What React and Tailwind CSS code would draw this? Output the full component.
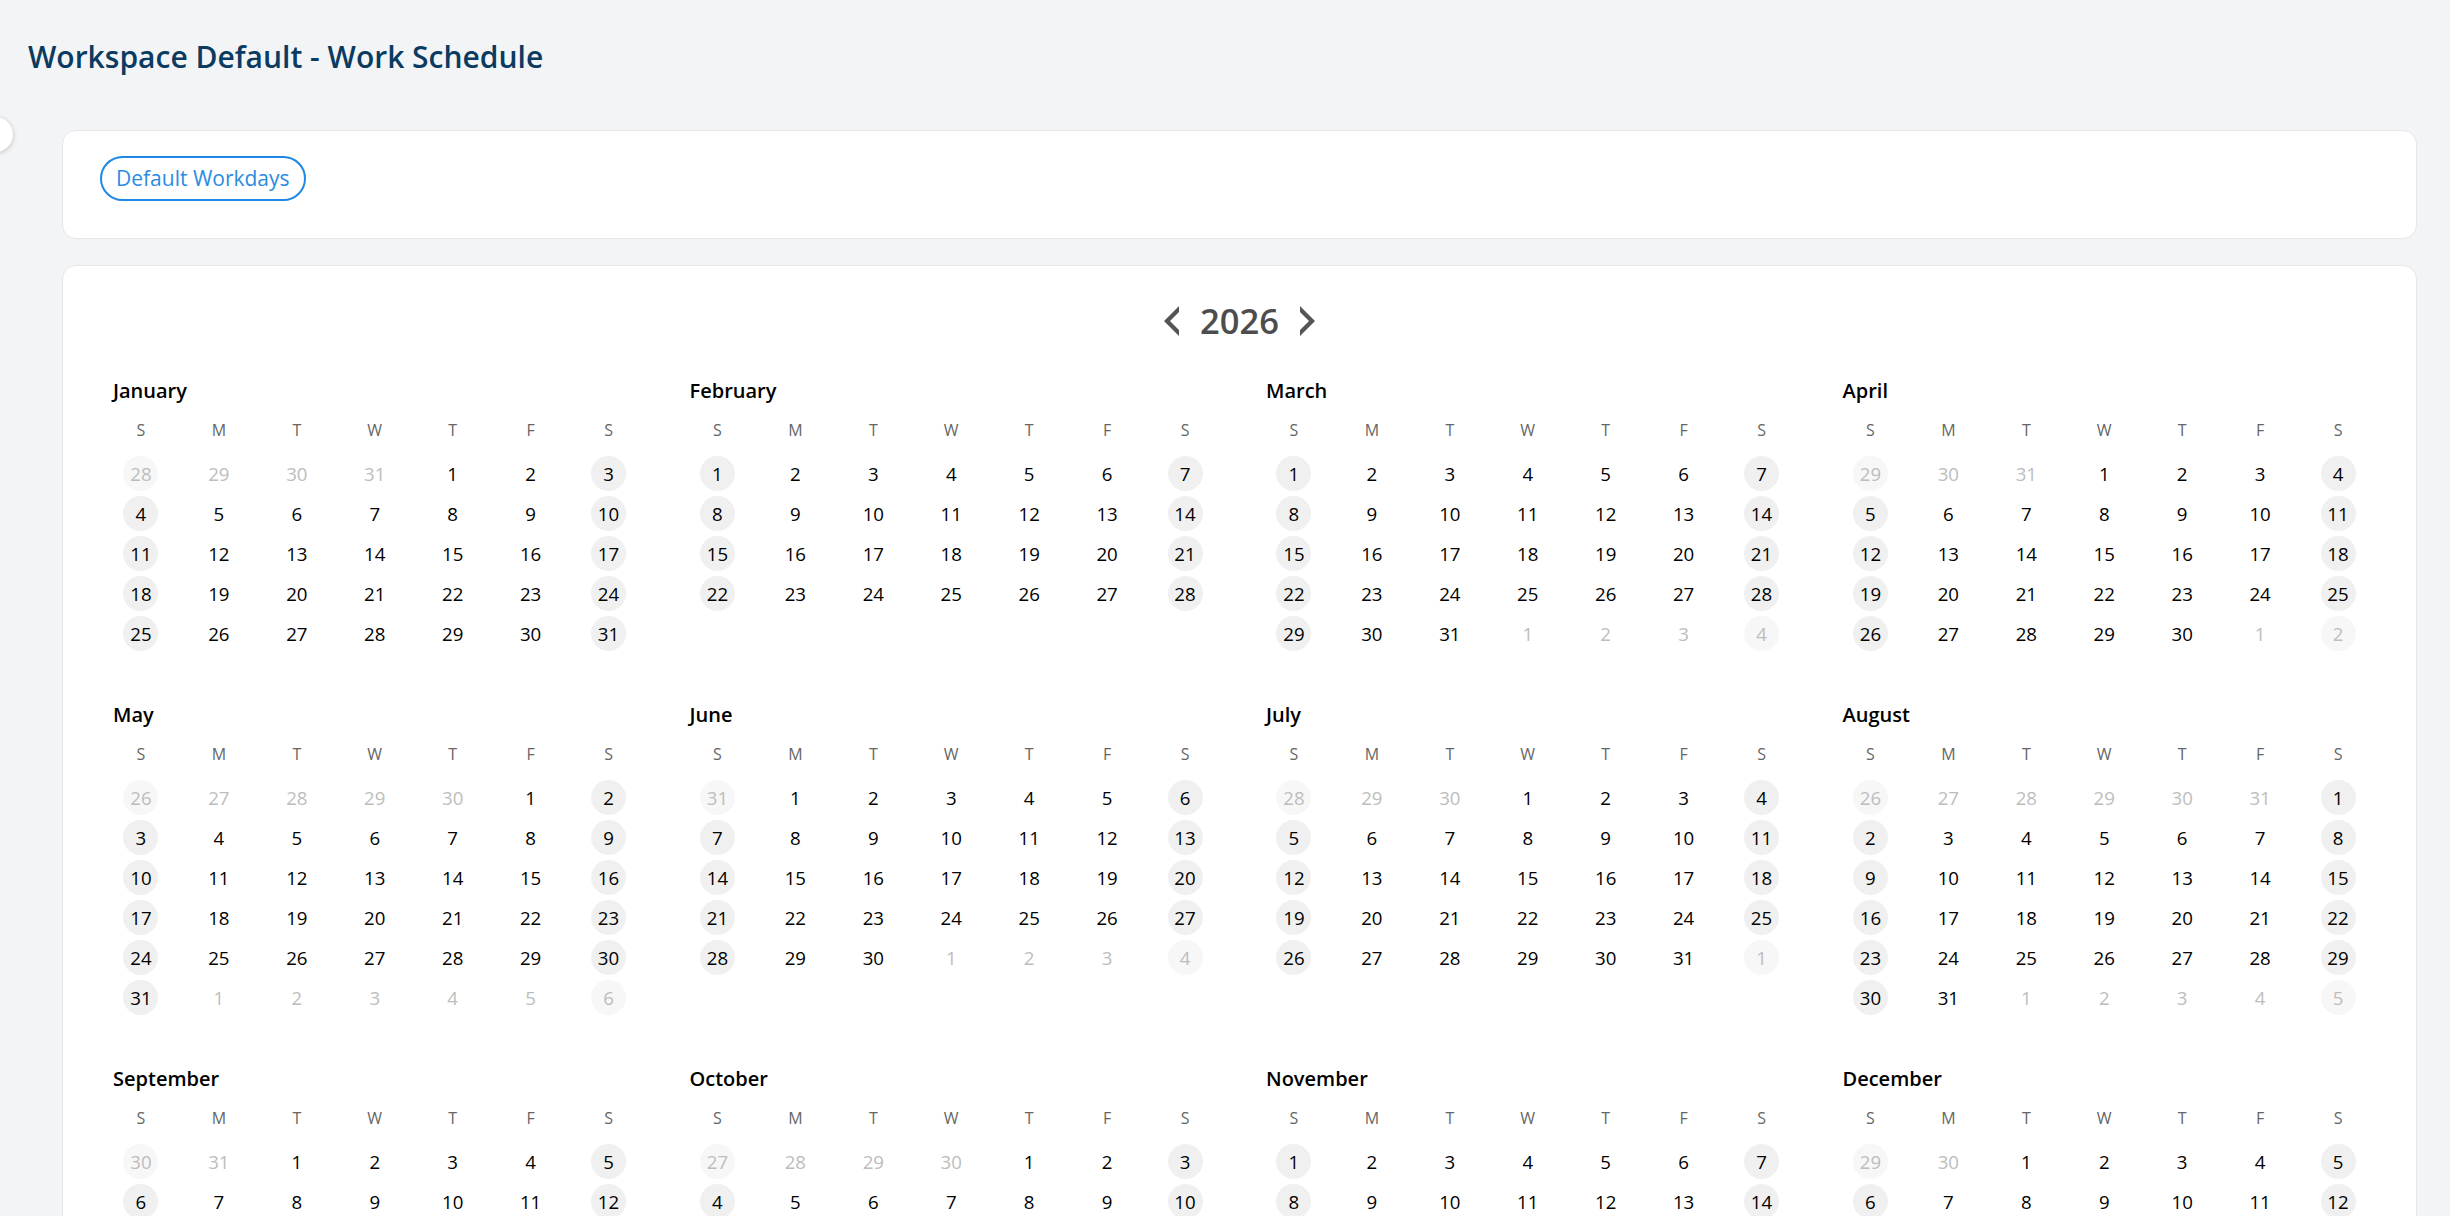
import React from "react";
import clsx from "clsx";

const YEAR = 2026;
const MONTHS = [
  "January",
  "February",
  "March",
  "April",
  "May",
  "June",
  "July",
  "August",
  "September",
  "October",
  "November",
  "December",
];
const WEEKDAYS = ["S", "M", "T", "W", "T", "F", "S"];

// full weeks (Sunday first) covering the month, padded with the neighbours' days
function monthDays(year, month) {
  const first = new Date(year, month, 1);
  const last = new Date(year, month + 1, 0);
  const start = new Date(year, month, 1 - first.getDay());
  const end = new Date(year, month, last.getDate() + (6 - last.getDay()));
  const days = [];
  for (let d = new Date(start); d <= end; d.setDate(d.getDate() + 1)) {
    days.push({
      key: d.toISOString(),
      day: d.getDate(),
      inMonth: d.getMonth() === month,
      weekend: d.getDay() === 0 || d.getDay() === 6,
    });
  }
  return days;
}

function Chevron({ dir }) {
  const points =
    dir === "left"
      ? "0,15 15,0 15,6 6,15 15,24 15,30"
      : "15,15 0,0 0,6 9,15 0,24 0,30";
  return (
    <button className="flex items-center">
      <svg width="15" height="30" viewBox="0 0 15 30">
        <polygon points={points} fill="#555555" />
      </svg>
    </button>
  );
}

function DayCell({ day, inMonth, weekend }) {
  return (
    <div
      className={clsx(
        "flex h-[35px] w-[35px] items-center justify-center rounded-full text-[18.67px] leading-[35px]",
        weekend && (inMonth ? "bg-[#f0f0f0]" : "bg-[#f7f7f7]"),
        inMonth ? "text-black" : "text-[#bdbdbd]"
      )}
    >
      {day}
    </div>
  );
}

function Month({ index }) {
  const days = monthDays(YEAR, index);
  return (
    <div>
      <div className="text-[20px] font-semibold leading-[28px] text-black">
        {MONTHS[index]}
      </div>
      <div className="mt-[13px] grid grid-cols-7 gap-x-[22px] text-center text-[16px] leading-[24px] text-[#666666]">
        {WEEKDAYS.map((w, i) => (
          <div key={i}>{w}</div>
        ))}
      </div>
      <div className="mt-[14px] grid grid-cols-7 justify-items-center gap-x-[22px] gap-y-[5px]">
        {days.map((d) => (
          <DayCell key={d.key} {...d} />
        ))}
      </div>
    </div>
  );
}

export default function App() {
  return (
    <div className="relative min-h-screen bg-[#f3f4f6] font-['Open_Sans',sans-serif]">
      {/* sidebar collapse handle */}
      <div className="absolute left-[-22px] top-[117px] h-[35px] w-[35px] rounded-full bg-white shadow-[0_1px_5px_rgba(0,0,0,0.22)]" />

      <div className="pl-[28px] pr-[33px] pt-[37px]">
        <h1 className="text-[30px] font-semibold leading-[40px] text-[#0b3b60]">
          Workspace Default - Work Schedule
        </h1>

        <div className="ml-[34px] mt-[53px] flex flex-col gap-[26px]">
          {/* Default workdays */}
          <div className="rounded-[14px] border border-[#e5e7eb] bg-white pb-[37px] pl-[37px] pt-[25px]">
            <button className="flex h-[45px] items-center rounded-full border-2 border-[#1e88e5] px-[14px] text-[21px] text-[#2a8be3]">
              Default Workdays
            </button>
          </div>

          {/* Year calendar */}
          <div className="rounded-[14px] border border-[#e5e7eb] bg-white px-[50px] pb-[60px] pt-[32px]">
            <div className="flex h-[45px] items-center justify-center gap-[21px]">
              <Chevron dir="left" />
              <span className="text-[34.5px] font-semibold leading-[45px] text-[#4d4d4d]">
                {YEAR}
              </span>
              <Chevron dir="right" />
            </div>

            <div className="mt-[34px] grid grid-cols-4 gap-x-[53px] gap-y-[50px]">
              {MONTHS.map((m, i) => (
                <Month key={m} index={i} />
              ))}
            </div>
          </div>
        </div>
      </div>
    </div>
  );
}
